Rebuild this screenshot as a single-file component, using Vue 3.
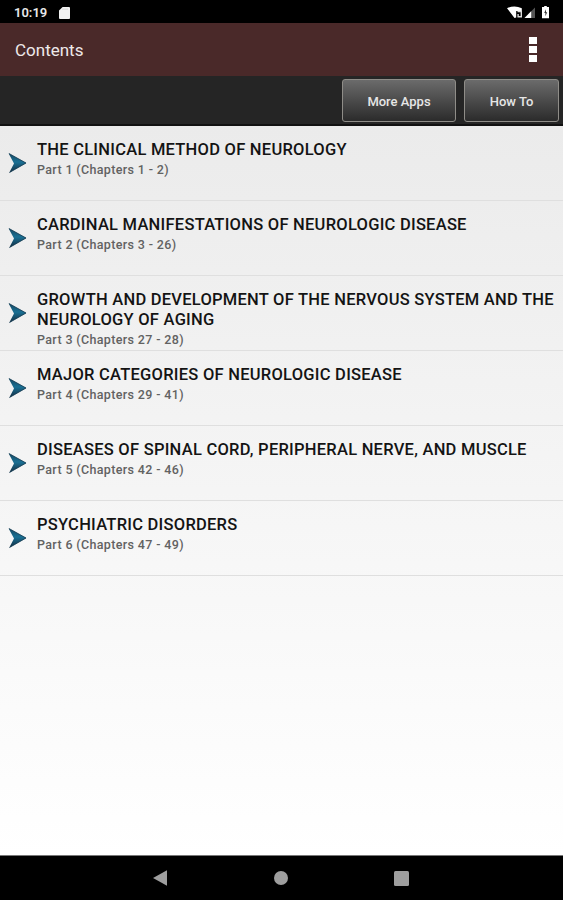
<template>
  <div class="screen">
    <div class="status">
      <span class="status__time">10:19</span>
      <svg class="status__card" width="11" height="12" viewBox="0 0 11 12">
        <path d="M3.6 0H10q1 0 1 1v10q0 1-1 1H1q-1 0-1-1V3.6z" fill="#f2f2f2" />
        <path d="M4 1.6v1.200M6 1.600v1.200M8 1.600v1.200" stroke="#bbb" stroke-width=".8" />
      </svg>
      <svg class="status__icons" width="44" height="14" viewBox="0 0 44 14">
        <path d="M0 2.2Q7.5-1.200 14.800 2.200V5H9.200v6.600L7.5 12z" fill="#fff" />
        <path d="M10.500 5.500h3.800v5.200h-3.200V8" fill="none" stroke="#ddd" stroke-width="1.400" />
        <path d="M17.500 12L28 1.500V12z" fill="#555" />
        <path d="M17.500 12L24.200 5.300V12z" fill="#fff" />
        <path d="M36 1h1.200V0h2.600v1H42v11.300h-7V1z" fill="#fff" />
        <path d="M39 3.200L37.200 7h1.200v3.200L40.200 6.200H39z" fill="#333" />
      </svg>
    </div>

    <div class="appbar">
      <span class="appbar__title">Contents</span>
      <div class="appbar__menu">
        <i></i>
        <i></i>
        <i></i>
      </div>
    </div>

    <div class="toolbar">
      <button class="btn btn--apps">More Apps</button>
      <button class="btn btn--how">How To</button>
    </div>

    <ul class="list">
      <li v-for="item in parts" :key="item.part" class="row">
        <svg class="row__arrow" width="19" height="22" viewBox="0 0 19 22">
          <defs>
            <linearGradient id="arrow" x1="0" y1="0" x2="0" y2="1">
              <stop offset="0" stop-color="#15465f" />
              <stop offset=".45" stop-color="#1a7094" />
              <stop offset="1" stop-color="#122c40" />
            </linearGradient>
          </defs>
          <path d="M.500 1.200L18.300 11 1.200 20.800 6 11.600z" fill="url(#arrow)" />
          <path d="M1 1.500L18 11 1.500 20.500" fill="none" stroke="#143a50" stroke-width=".8" />
        </svg>
        <div class="row__text">
          <div class="row__title">{{ item.title }}</div>
          <div class="row__sub">{{ item.part }} (Chapters {{ item.chapters }})</div>
        </div>
      </li>
    </ul>

    <div class="nav">
      <svg width="14" height="16" viewBox="0 0 14 16">
        <path d="M0 8L14 .2v15.600z" fill="#9e9e9e" />
      </svg>
      <svg width="14" height="14" viewBox="0 0 14 14">
        <circle cx="7" cy="7" r="7" fill="#9e9e9e" />
      </svg>
      <svg width="15" height="15" viewBox="0 0 15 15">
        <rect width="15" height="15" rx="1.500" fill="#9e9e9e" />
      </svg>
    </div>
  </div>
</template>

<script setup>
const parts = [
  { title: "THE CLINICAL METHOD OF NEUROLOGY", part: "Part 1", chapters: "1 - 2" },
  { title: "CARDINAL MANIFESTATIONS OF NEUROLOGIC DISEASE", part: "Part 2", chapters: "3 - 26" },
  {
    title: "GROWTH AND DEVELOPMENT OF THE NERVOUS SYSTEM AND THE NEUROLOGY OF AGING",
    part: "Part 3",
    chapters: "27 - 28",
  },
  { title: "MAJOR CATEGORIES OF NEUROLOGIC DISEASE", part: "Part 4", chapters: "29 - 41" },
  {
    title: "DISEASES OF SPINAL CORD, PERIPHERAL NERVE, AND MUSCLE",
    part: "Part 5",
    chapters: "42 - 46",
  },
  { title: "PSYCHIATRIC DISORDERS", part: "Part 6", chapters: "47 - 49" },
];
</script>

<style>
body {
  margin: 0;
  background: #000;
}
</style>

<style scoped>
.screen {
  display: flex;
  flex-direction: column;
  height: 900px;
  overflow: hidden;
  font-family: Roboto, "Liberation Sans", sans-serif;
}

.status {
  display: flex;
  align-items: center;
  box-sizing: border-box;
  height: 23px;
  padding: 2px 12px 0 14px;
  background: #000;
}

.status__time {
  width: 45px;
  color: #e8e8e8;
  font-size: 13px;
  font-weight: 600;
  line-height: 20px;
}

.status__icons {
  margin-left: auto;
}

.appbar {
  display: flex;
  align-items: center;
  justify-content: space-between;
  box-sizing: border-box;
  height: 53px;
  padding: 0 26px 0 15px;
  background: #4a2929;
}

.appbar__title {
  color: #efe9e9;
  font-size: 17px;
}

.appbar__menu {
  display: flex;
  flex-direction: column;
  gap: 2px;
}

.appbar__menu i {
  width: 8px;
  height: 7px;
  background: #fff;
}

.toolbar {
  display: flex;
  justify-content: flex-end;
  gap: 8px;
  box-sizing: border-box;
  height: 50px;
  padding: 3px 4px 0 0;
  background: #252525;
  border-bottom: 2px solid #111;
}

.btn {
  box-sizing: border-box;
  height: 43px;
  padding: 2px 0 0;
  border: 1px solid #8f8d88;
  border-radius: 3px;
  background: linear-gradient(#6b6b6b, #2b2b2b);
  color: #e6e6e6;
  font-family: inherit;
  font-size: 13px;
  font-weight: 500;
}

.btn--apps {
  width: 114px;
}

.btn--how {
  width: 95px;
}

.list {
  flex: 1;
  margin: 0;
  padding: 0;
  list-style: none;
  background: linear-gradient(#ebebeb, #fff);
}

.row {
  display: flex;
  box-sizing: border-box;
  height: 75px;
  padding: 14px 5px 0 8px;
  border-bottom: 1px solid #dfdfdf;
}

.row__arrow {
  flex: none;
  margin: 12px 10px 0 0;
}

.row__title {
  color: #141414;
  font-size: 16.5px;
  font-weight: 500;
  letter-spacing: 0.25px;
  line-height: 20px;
}

.row__sub {
  color: #626262;
  font-size: 12.5px;
  font-weight: 500;
  letter-spacing: 0.35px;
  line-height: 20px;
}

.nav {
  display: flex;
  align-items: center;
  justify-content: space-between;
  box-sizing: border-box;
  height: 45px;
  padding: 0 154px 0 153px;
  background: #000;
  border-top: 1px solid #777;
}
</style>
